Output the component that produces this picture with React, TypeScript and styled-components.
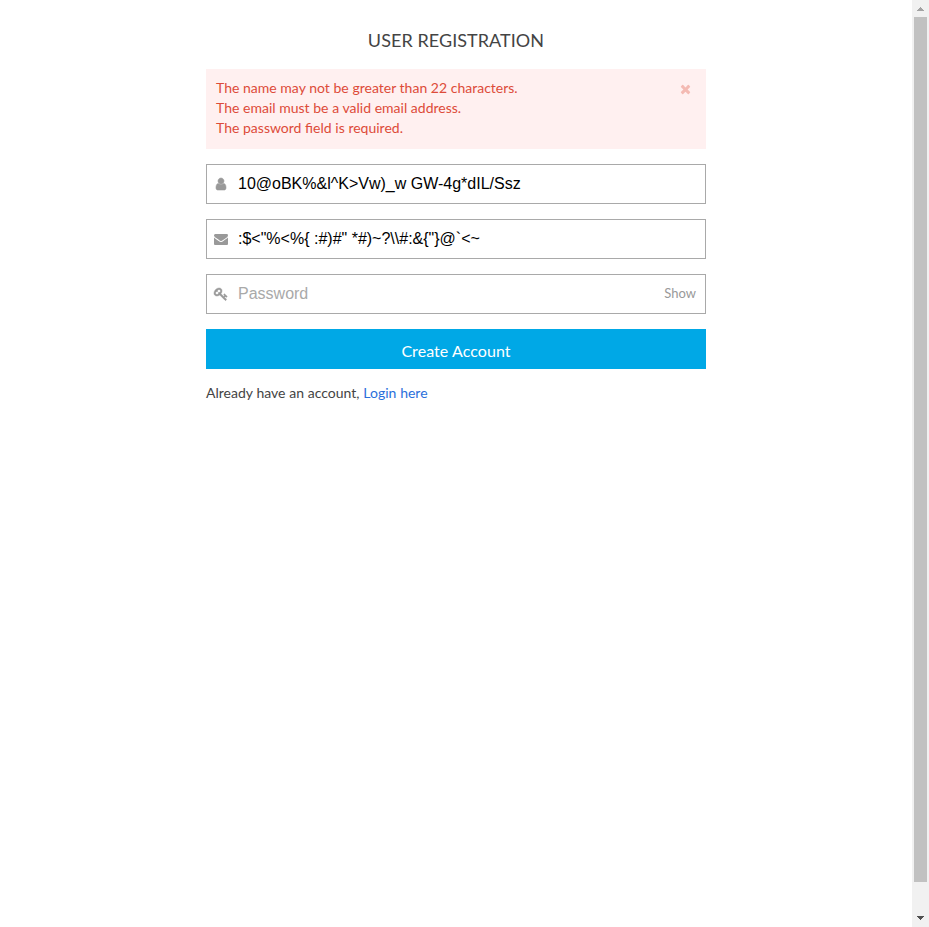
import React, { useState } from "react";
import styled, { createGlobalStyle } from "styled-components";

const GlobalStyle = createGlobalStyle`
  * { box-sizing: border-box; }
  html, body { margin: 0; padding: 0; height: 100%; overflow: hidden; background: #fff; }
  body { font-family: Lato, sans-serif; font-size: 14px; line-height: 20px; color: #444; }
`;

const Page = styled.div`
  display: flex;
  height: 927px;
`;

const Content = styled.main`
  flex: 1;
  display: flex;
  justify-content: center;
`;

const Form = styled.form`
  width: 500px;
  display: flex;
  flex-direction: column;
  gap: 15px;
  padding-top: 28px;
`;

const Title = styled.h1`
  margin: 0;
  height: 26px;
  font-size: 18px;
  line-height: 24px;
  font-weight: 400;
  letter-spacing: 0.06px;
  text-align: center;
  text-transform: uppercase;
`;

const Alert = styled.div`
  display: flex;
  justify-content: space-between;
  align-items: flex-start;
  height: 80px;
  padding: 9px 15px 11px 10px;
  background: #fff0f0;
  color: #dd4b39;
`;

const Messages = styled.ul`
  margin: 0;
  padding: 0;
  list-style: none;
  word-spacing: 0.08px;
`;

const Dismiss = styled.button`
  display: flex;
  padding: 0;
  margin-top: 4px;
  border: 0;
  background: none;
  color: #f4bab3;
`;

const Field = styled.label`
  display: flex;
  align-items: center;
  height: 40px;
  padding: 0 9px 0 7px;
  border: 1px solid #a9a9a9;
`;

const FieldIcon = styled.span`
  display: flex;
  justify-content: center;
  width: 14px;
  margin-right: 10px;
  color: #999;
`;

const Input = styled.input`
  flex: 1;
  min-width: 0;
  height: 38px;
  padding: 0;
  border: 0;
  outline: 0;
  background: transparent;
  font: 16px "Liberation Sans", Arial, sans-serif;
  color: #000;
  &::placeholder { color: #a9a9a9; opacity: 1; }
`;

const ShowToggle = styled.button`
  padding: 0 0 2px;
  border: 0;
  background: none;
  font: 13px/20px Lato, sans-serif;
  color: #999;
`;

const Submit = styled.button`
  height: 40px;
  padding: 4px 0 0;
  border: 0;
  background: #00a8e6;
  color: #fff;
  font: 16px/20px Lato, sans-serif;
  letter-spacing: 0.06px;
`;

const Footer = styled.p`
  margin: -1px 0 0;
  line-height: 20px;
  word-spacing: 0.2px;
`;

const Link = styled.a`
  color: #2a6fdb;
  text-decoration: none;
`;

const Scrollbar = styled.div`
  display: flex;
  flex-direction: column;
  align-items: center;
  width: 17px;
  background: #f1f1f1;
`;

const ScrollButton = styled.div<{ $color: string; $height: number }>`
  display: flex;
  align-items: center;
  justify-content: center;
  width: 17px;
  height: ${(p) => p.$height}px;
  color: ${(p) => p.$color};
`;

const Track = styled.div`
  flex: 1;
`;

const Thumb = styled.div`
  width: 13px;
  height: 865px;
  background: #c1c1c1;
`;

const paths = {
  user: { w: 1280, stroke: 70, d: "M1280 137q0 -109 -62.5 -187t-150.5 -78h-854q-88 0 -150.5 78t-62.5 187q0 85 8.5 160.5t31.5 152t58.5 131t94 89t134.5 34.5q131 -128 313 -128t313 128q76 0 134.5 -34.5t94 -89t58.5 -131t31.5 -152t8.5 -160.5zM1024 1024q0 -159 -112.5 -271.5t-271.5 -112.5t-271.5 112.5t-112.5 271.5t112.5 271.5t271.5 112.5t271.5 -112.5t112.5 -271.5z" },
  envelope: { w: 1792, stroke: 0, d: "M1792 826v-794q0 -66 -47 -113t-113 -47h-1472q-66 0 -113 47t-47 113v794q44 -49 101 -87q362 -246 497 -345q57 -42 92.5 -65.5t94.5 -48t110 -24.5h1h1q51 0 110 24.5t94.5 48t92.5 65.5q170 123 498 345q57 39 100 87zM1792 1120q0 -79 -49 -151t-122 -123q-376 -261 -468 -325q-10 -7 -42.5 -30.5t-54 -38t-52 -32.5t-57.5 -27t-50 -9h-1h-1q-23 0 -50 9t-57.5 27t-52 32.5t-54 38t-42.5 30.5q-91 64 -262 182.5t-205 142.5q-62 42 -117 115.5t-55 136.5q0 78 41.5 130t118.5 52h1472q65 0 112.5 -47t47.5 -113z" },
  key: { w: 1792, stroke: 60, d: "M832 1024q0 80 -56 136t-136 56t-136 -56t-56 -136q0 -42 19 -83q-41 19 -83 19q-80 0 -136 -56t-56 -136t56 -136t136 -56t136 56t56 136q0 42 -19 83q41 -19 83 -19q80 0 136 56t56 136zM1683 320q0 -17 -49 -66t-66 -49q-9 0 -28.5 16t-36.5 33t-38.5 40t-24.5 26l-96 -96l220 -220q28 -28 28 -68q0 -42 -39 -81t-81 -39q-40 0 -68 28l-671 671q-176 -131 -365 -131q-163 0 -265.5 102.5t-102.5 265.5q0 160 95 313t248 248t313 95q163 0 265.5 -102.5t102.5 -265.5q0 -189 -131 -365l355 -355l96 96q-3 3 -26 24.5t-40 38.5t-33 36.5t-16 28.5q0 17 49 66t66 49q13 0 23 -10q6 -6 46 -44.5t82 -79.5t86.5 -86t73 -78t28.5 -41z" },
  times: { w: 1408, stroke: 0, d: "M1298 214q0 -40 -28 -68l-136 -136q-28 -28 -68 -28t-68 28l-294 294l-294 -294q-28 -28 -68 -28t-68 28l-136 136q-28 28 -28 68t28 68l294 294l-294 294q-28 28 -28 68t28 68l136 136q28 28 68 28t68 -28l294 -294l294 294q28 28 68 28t68 -28l136 -136q28 -28 28 -68t-28 -68l-294 -294l294 -294q28 -28 28 -68z" },
};

function Icon({ name }: { name: keyof typeof paths }) {
  const { w, d, stroke } = paths[name];
  return (
    <svg width={w / 128} height={14} viewBox={`0 0 ${w} 1792`} fill="currentColor" stroke="currentColor" strokeWidth={stroke} overflow="visible" aria-hidden="true">
      <path transform="translate(0 1536) scale(1 -1)" d={d} />
    </svg>
  );
}

const errors = [
  "The name may not be greater than 22 characters.",
  "The email must be a valid email address.",
  "The password field is required.",
];

export default function App() {
  const [visible, setVisible] = useState(false);
  return (
    <>
      <GlobalStyle />
      <Page>
        <Content>
          <Form onSubmit={(e) => e.preventDefault()}>
            <Title>User Registration</Title>
            <Alert role="alert">
              <Messages>
                {errors.map((e) => <li key={e}>{e}</li>)}
              </Messages>
              <Dismiss type="button" aria-label="Dismiss"><Icon name="times" /></Dismiss>
            </Alert>
            <Field>
              <FieldIcon><Icon name="user" /></FieldIcon>
              <Input spellCheck={false} defaultValue="10@oBK%&l^K>Vw)_w GW-4g*dIL/Ssz" />
            </Field>
            <Field>
              <FieldIcon><Icon name="envelope" /></FieldIcon>
              <Input spellCheck={false} defaultValue={':$<"%<%{ :#)#" *#)~?\\\\#:&{"}@`<~'} />
            </Field>
            <Field>
              <FieldIcon><Icon name="key" /></FieldIcon>
              <Input type={visible ? "text" : "password"} placeholder="Password" />
              <ShowToggle type="button" onClick={() => setVisible(!visible)}>
                {visible ? "Hide" : "Show"}
              </ShowToggle>
            </Field>
            <Submit>Create Account</Submit>
            <Footer>Already have an account, <Link href="#">Login here</Link></Footer>
          </Form>
        </Content>
        <Scrollbar aria-hidden="true">
          <ScrollButton $color="#a3a3a3" $height={17}>
            <svg width="7" height="4" viewBox="0 0 7 4" fill="currentColor" shapeRendering="crispEdges"><path d="M3 0h1v1h1v1h1v1h1v1H0V3h1V2h1V1h1z" /></svg>
          </ScrollButton>
          <Track><Thumb /></Track>
          <ScrollButton $color="#505050" $height={19}>
            <svg width="7" height="4" viewBox="0 0 7 4" fill="currentColor" shapeRendering="crispEdges"><path d="M0 0h7v1H6v1H5v1H4v1H3V3H2V2H1V1H0z" /></svg>
          </ScrollButton>
        </Scrollbar>
      </Page>
    </>
  );
}
